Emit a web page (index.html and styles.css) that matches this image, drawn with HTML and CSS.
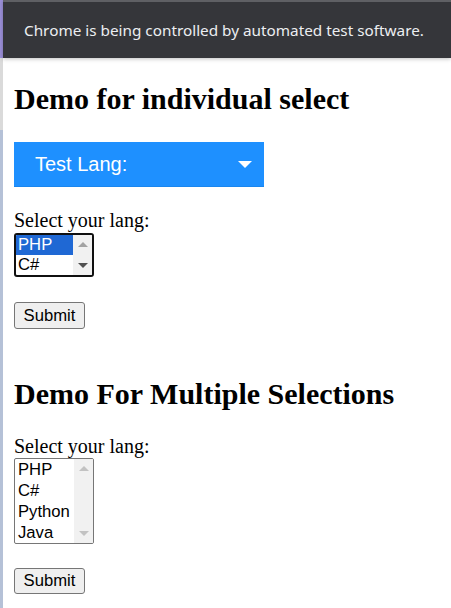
FILE: index.html
```html
<!DOCTYPE html>
<html>
<head>
<meta charset="utf-8">
<link rel="stylesheet" href="styles.css">
</head>
<body>
<div class="frame">
  <div class="strip">
    <div class="strip-top"></div>
    <div class="strip-mid"></div>
    <div class="strip-low"></div>
  </div>
  <div class="main">
    <div class="infobar">Chrome is being controlled by automated test software.</div>
    <div class="page">
      <h2 class="title title-first">Demo for individual select</h2>
      <div class="custom-select">
        <span class="cs-text">Test Lang:</span>
        <span class="caret"></span>
      </div>
      <form class="form form-first">
        <div class="label">Select your lang:</div>
        <div class="listbox listbox-focused">
          <div class="options">
            <div class="opt opt-selected">PHP</div>
            <div class="opt">C#</div>
          </div>
          <div class="scrollbar">
            <span class="arrow-up"></span>
            <span class="arrow-down arrow-dark"></span>
          </div>
        </div>
        <button type="button" class="submit">Submit</button>
      </form>

      <h2 class="title title-second">Demo For Multiple Selections</h2>
      <form class="form form-second">
        <div class="label">Select your lang:</div>
        <div class="listbox listbox-plain">
          <div class="options">
            <div class="opt">PHP</div>
            <div class="opt">C#</div>
            <div class="opt">Python</div>
            <div class="opt">Java</div>
          </div>
          <div class="scrollbar">
            <span class="arrow-up"></span>
            <span class="arrow-down"></span>
          </div>
        </div>
        <button type="button" class="submit submit-second">Submit</button>
      </form>
    </div>
  </div>
</div>
</body>
</html>
```

FILE: styles.css
```css
html, body {
  margin: 0;
  padding: 0;
  background: #ffffff;
  height: 100%;
  overflow: hidden;
}

.frame {
  display: flex;
  height: 608px;
}

.strip {
  width: 3px;
  display: flex;
  flex-direction: column;
  flex: none;
}
.strip-top { height: 58px; background: #9b8fd8; }
.strip-mid { height: 72px; background: #dadada; }
.strip-low { flex: 1; background: #b5c1d7; }

.main {
  flex: 1;
  display: flex;
  flex-direction: column;
  min-width: 0;
}

.infobar {
  height: 56px;
  border-top: 2px solid #5f6064;
  background: #35363a;
  color: #eceef1;
  font-family: "Noto Sans", "Open Sans", sans-serif;
  font-size: 15.3px;
  line-height: 57px;
  padding-left: 21px;
  box-shadow: 0 1px 4px rgba(0,0,0,0.25);
  position: relative;
  z-index: 1;
  white-space: nowrap;
}

.page {
  padding-left: 11px;
  font-family: "Liberation Serif", "Times New Roman", serif;
  color: #000;
}

.title {
  margin: 0;
  font-size: 30px;
  font-weight: bold;
  line-height: 36px;
}
.title-first { margin-top: 23px; }
.title-second { margin-top: 47px; }

.custom-select {
  margin-top: 25px;
  width: 250px;
  height: 45px;
  box-sizing: border-box;
  background: #1e90ff;
  border-bottom: 1px solid #1a86ee;
  display: flex;
  align-items: center;
  justify-content: space-between;
  padding: 0 12px 0 21px;
  font-family: "Liberation Sans", Arial, sans-serif;
  font-size: 20px;
  color: #ffffff;
}
.cs-text { padding-top: 1px; }
.caret {
  width: 0;
  height: 0;
  border-left: 7px solid transparent;
  border-right: 7px solid transparent;
  border-top: 7px solid #ffffff;
  margin-top: 1px;
}

.form { display: flex; flex-direction: column; align-items: flex-start; }
.form-first { margin-top: 22px; }
.form-second { margin-top: 23px; }

.label {
  font-size: 20px;
  line-height: 23px;
}

.listbox {
  width: 80px;
  box-sizing: border-box;
  display: flex;
  background: #fff;
  font-family: "Liberation Sans", Arial, sans-serif;
  font-size: 16.67px;
  overflow: hidden;
}
.listbox-focused {
  margin-top: 1px;
  height: 44px;
  border: 2px solid #101010;
  border-radius: 3px;
}
.listbox-focused .opt { height: 20px; line-height: 20px; padding-left: 2px; }
.listbox-plain {
  height: 86px;
  border: 1px solid #767676;
  border-radius: 2px;
}
.listbox-plain .opt { height: 21px; line-height: 21px; padding-left: 3px; }

.options { flex: 1; min-width: 0; }
.opt { color: #000; white-space: nowrap; }
.opt-selected { background: #1f68d4; color: #fff; }

.scrollbar {
  width: 19px;
  flex: none;
  background: #f1f1f1;
  display: flex;
  flex-direction: column;
  justify-content: space-between;
  align-items: center;
  padding: 7px 0;
  box-sizing: border-box;
}
.arrow-up {
  width: 0; height: 0;
  border-left: 5px solid transparent;
  border-right: 5px solid transparent;
  border-bottom: 5px solid #a3a3a3;
}
.arrow-down {
  width: 0; height: 0;
  border-left: 5px solid transparent;
  border-right: 5px solid transparent;
  border-top: 5px solid #a3a3a3;
}
.listbox-plain .arrow-up { border-bottom-color: #c2c2c2; }
.listbox-plain .arrow-down { border-top-color: #c2c2c2; }
.arrow-dark { border-top-color: #505050; }

.submit {
  margin-top: 25px;
  width: 71px;
  height: 27px;
  padding: 0;
  background: #efefef;
  border: 1px solid #767676;
  border-radius: 3px;
  font-family: "Liberation Sans", Arial, sans-serif;
  font-size: 16.67px;
  color: #000;
}
.submit-second { margin-top: 24px; height: 26px; }
```
